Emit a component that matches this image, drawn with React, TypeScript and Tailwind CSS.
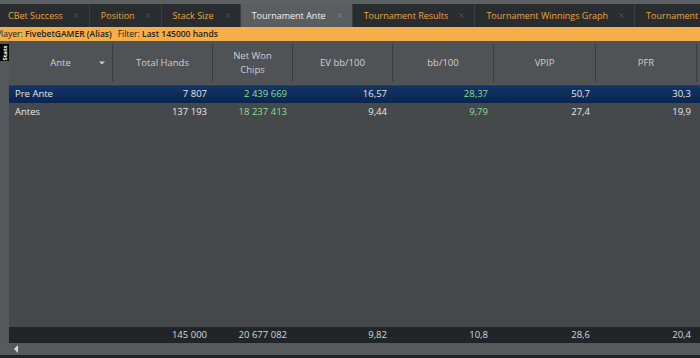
import { X } from 'lucide-react';

const tabs = [
  { label: 'CBet Success', active: false },
  { label: 'Position', active: false },
  { label: 'Stack Size', active: false },
  { label: 'Tournament Ante', active: true },
  { label: 'Tournament Results', active: false },
  { label: 'Tournament Winnings Graph', active: false },
  { label: 'Tournament Winnings', active: false },
];

const cols = ['w-[104px]', 'w-[100px]', 'w-[80px]', 'w-[100px]', 'w-[101px]', 'w-[102px]', 'w-[101px]'];

const rows = [
  { name: 'Pre Ante', hands: '7 807', chips: '2 439 669', ev: '16,57', bb: '28,37', vpip: '50,7', pfr: '30,3', selected: true },
  { name: 'Antes', hands: '137 193', chips: '18 237 413', ev: '9,44', bb: '9,79', vpip: '27,4', pfr: '19,9', selected: false },
];

function HeaderCell({ w, children, first }: { w: string; children: React.ReactNode; first?: boolean }) {
  return (
    <div className={`${w} shrink-0 h-full flex items-center justify-center text-center leading-[14px] text-[#cfcfcf] border-r border-[#393c3f] ${first ? 'relative' : ''}`}>
      {children}
    </div>
  );
}

function Row({ r }: { r: (typeof rows)[number] }) {
  const base = r.selected
    ? 'bg-[linear-gradient(180deg,#123565_0%,#0a2550_100%)] h-[17px]'
    : 'h-[18px]';
  return (
    <div className={`flex items-center text-[#e8e8e8] ${base}`}>
      <div className={`${cols[0]} shrink-0 pl-[6px]`}>{r.name}</div>
      <div className={`${cols[1]} shrink-0 text-right pr-[6px]`}>{r.hands}</div>
      <div className={`${cols[2]} shrink-0 text-right pr-[6px] text-[#8fdc93]`}>{r.chips}</div>
      <div className={`${cols[3]} shrink-0 text-right pr-[6px]`}>{r.ev}</div>
      <div className={`${cols[4]} shrink-0 text-right pr-[6px] text-[#8fdc93]`}>{r.bb}</div>
      <div className={`${cols[5]} shrink-0 text-right pr-[6px]`}>{r.vpip}</div>
      <div className={`${cols[6]} shrink-0 text-right pr-[6px]`}>{r.pfr}</div>
    </div>
  );
}

export default function App() {
  return (
    <div className="w-[700px] h-[358px] overflow-hidden flex flex-col bg-[#46494c] text-[9.5px] font-['Open_Sans',sans-serif]">
      {/* top strip */}
      <div className="h-[4px] bg-[#5e6164] shrink-0" />

      {/* tabs */}
      <div className="h-[23px] shrink-0 flex bg-[#2a2d30] whitespace-nowrap -ml-[3px] text-[9px]">
        {tabs.map((t) => (
          <div
            key={t.label}
            className={`h-full flex items-center gap-[10px] shrink-0 border-r border-[#3c3f42] pl-[11px] pr-[9px] ${
              t.active ? 'bg-[#5b5e61] text-[#f0f0f0]' : 'text-[#e9a43e]'
            }`}
          >
            <span>{t.label}</span>
            <X size={7} strokeWidth={3} className={t.active ? 'text-[#8a8d90]' : 'text-[#55585b]'} />
          </div>
        ))}
      </div>

      {/* filter bar */}
      <div className="h-[14px] shrink-0 bg-[#f5ae48] flex items-center text-[8.5px] text-[#1d1d1d] whitespace-nowrap -ml-[4px]">
        <span>Player:&nbsp;</span>
        <span className="font-semibold">FivebetGAMER (Alias)</span>
        <span className="ml-[6px]">Filter:&nbsp;</span>
        <span className="font-semibold">Last 145000 hands</span>
      </div>

      {/* main */}
      <div className="flex-1 flex min-h-0">
        <div className="w-[9px] shrink-0 bg-[#55585b] pt-[3px]">
          <div className="w-[9px] h-[17px] bg-black flex items-center justify-center">
            <span className="-rotate-90 text-[6px] font-bold text-white leading-none">Stats</span>
          </div>
        </div>

        <div className="flex-1 flex flex-col min-w-0">
          {/* header */}
          <div className="h-[45px] shrink-0 flex bg-[#505356] border-b border-[#3a3d40] py-[3px]">
            <HeaderCell w={cols[0]} first>
              <span>Ante</span>
              <span className="absolute right-[7px] top-1/2 -translate-y-1/2 w-0 h-0 border-l-[3px] border-r-[3px] border-t-[3px] border-l-transparent border-r-transparent border-t-[#d0d0d0]" />
            </HeaderCell>
            <HeaderCell w={cols[1]}>Total Hands</HeaderCell>
            <HeaderCell w={cols[2]}>
              <span>
                Net Won
                <br />
                Chips
              </span>
            </HeaderCell>
            <HeaderCell w={cols[3]}>EV bb/100</HeaderCell>
            <HeaderCell w={cols[4]}>bb/100</HeaderCell>
            <HeaderCell w={cols[5]}>VPIP</HeaderCell>
            <HeaderCell w={cols[6]}>PFR</HeaderCell>
            <div className="flex-1" />
          </div>

          {/* rows */}
          <div className="flex-1 flex flex-col">
            {rows.map((r) => (
              <Row key={r.name} r={r} />
            ))}
          </div>

          {/* totals */}
          <div className="h-[16px] shrink-0 flex items-center bg-[#212528] text-[#d8d8d8]">
            <div className={`${cols[0]} shrink-0`} />
            <div className={`${cols[1]} shrink-0 text-right pr-[6px]`}>145 000</div>
            <div className={`${cols[2]} shrink-0 text-right pr-[6px]`}>20 677 082</div>
            <div className={`${cols[3]} shrink-0 text-right pr-[6px]`}>9,82</div>
            <div className={`${cols[4]} shrink-0 text-right pr-[6px]`}>10,8</div>
            <div className={`${cols[5]} shrink-0 text-right pr-[6px]`}>28,6</div>
            <div className={`${cols[6]} shrink-0 text-right pr-[6px]`}>20,4</div>
          </div>
        </div>
      </div>

      {/* scrollbar */}
      <div className="h-[12px] shrink-0 bg-[#575a5d] flex items-center pl-[14px]">
        <span className="w-0 h-0 border-t-[4px] border-b-[4px] border-r-[4px] border-t-transparent border-b-transparent border-r-[#d8d8d8]" />
      </div>
      <div className="h-[3px] shrink-0 bg-[#1f2124]" />
    </div>
  );
}
